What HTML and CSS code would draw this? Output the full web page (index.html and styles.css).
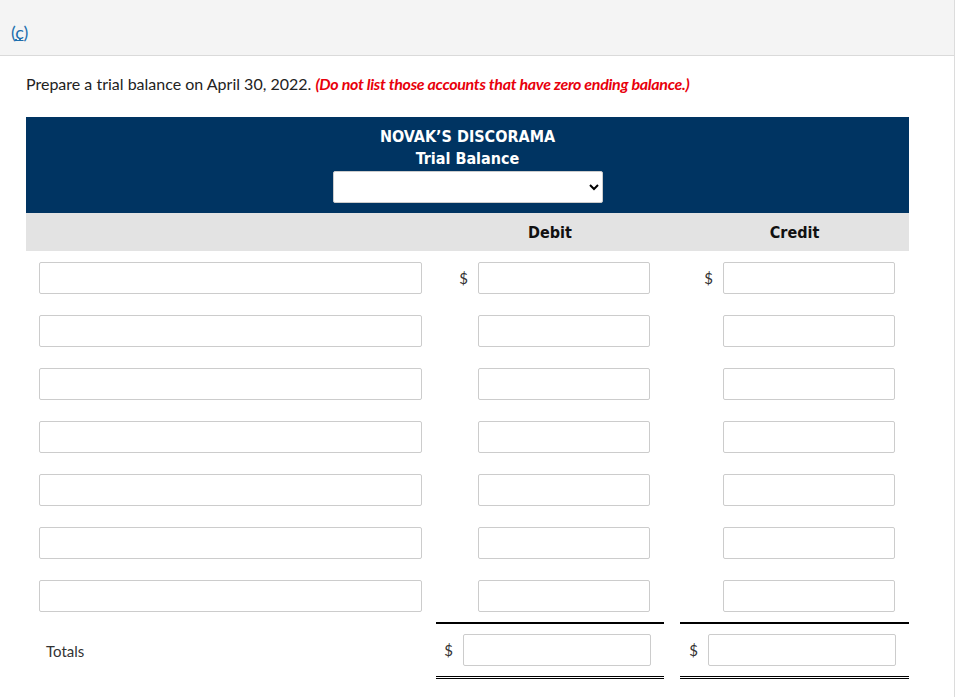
FILE: index.html
```html
<!DOCTYPE html>
<html lang="en">
<head>
    <meta charset="UTF-8">
    <title>Trial Balance</title>
    <link rel="stylesheet" href="styles.css">
</head>
<body>
    <div class="page">
        <div class="part-bar">
            <a href="#" class="part-link">(<u>c</u>)</a>
        </div>

        <div class="content">
            <p class="question">
                Prepare a trial balance on April 30, 2022.
                <em class="note">(Do not list those accounts that have zero ending balance.)</em>
            </p>

            <div class="tb">
                <div class="tb-head">
                    <div class="tb-title">NOVAK’S DISCORAMA</div>
                    <div class="tb-title">Trial Balance</div>
                    <select class="tb-date">
                        <option></option>
                    </select>
                </div>

                <div class="tb-row tb-cols">
                    <div></div>
                    <div class="col-label">Debit</div>
                    <div></div>
                    <div class="col-label">Credit</div>
                </div>

                <div class="tb-row">
                    <div class="acct"><input type="text"></div>
                    <div class="amt"><span class="cur">$</span><input type="text"></div>
                    <div></div>
                    <div class="amt"><span class="cur">$</span><input type="text"></div>
                </div>
                <div class="tb-row">
                    <div class="acct"><input type="text"></div>
                    <div class="amt"><input type="text"></div>
                    <div></div>
                    <div class="amt"><input type="text"></div>
                </div>
                <div class="tb-row">
                    <div class="acct"><input type="text"></div>
                    <div class="amt"><input type="text"></div>
                    <div></div>
                    <div class="amt"><input type="text"></div>
                </div>
                <div class="tb-row">
                    <div class="acct"><input type="text"></div>
                    <div class="amt"><input type="text"></div>
                    <div></div>
                    <div class="amt"><input type="text"></div>
                </div>
                <div class="tb-row">
                    <div class="acct"><input type="text"></div>
                    <div class="amt"><input type="text"></div>
                    <div></div>
                    <div class="amt"><input type="text"></div>
                </div>
                <div class="tb-row">
                    <div class="acct"><input type="text"></div>
                    <div class="amt"><input type="text"></div>
                    <div></div>
                    <div class="amt"><input type="text"></div>
                </div>
                <div class="tb-row">
                    <div class="acct"><input type="text"></div>
                    <div class="amt"><input type="text"></div>
                    <div></div>
                    <div class="amt"><input type="text"></div>
                </div>

                <div class="tb-row totals">
                    <div class="totals-label">Totals</div>
                    <div class="amt sum"><span class="cur">$</span><input type="text"></div>
                    <div></div>
                    <div class="amt sum"><span class="cur">$</span><input type="text"></div>
                </div>
            </div>
        </div>
    </div>
</body>
</html>
```

FILE: styles.css
```css
body {
    margin: 0;
    font-family: Lato, "Open Sans", Arial, sans-serif;
    color: #222;
    background-color: #fff;
}

.page {
    width: 954px;
    min-height: 697px;
    border-right: 1px solid #dcdcdc;
}

.part-bar {
    height: 56px;
    background-color: #f4f4f4;
    border-bottom: 1px solid #dadada;
    padding-left: 11px;
    box-sizing: border-box;
}

.part-link {
    display: inline-block;
    margin-top: 21px;
    font-size: 18px;
    color: #1c6fae;
    text-decoration: underline dotted;
}

.content {
    padding: 0 26px;
}

.question {
    margin: 18px 0 0;
    font-size: 16px;
    line-height: 20px;
}

.note {
    color: #e8000b;
    font-weight: bold;
    font-style: italic;
    letter-spacing: -0.3px;
}

.tb {
    width: 883px;
    margin-top: 23px;
}

.tb-head {
    background-color: #003462;
    color: #fff;
    text-align: center;
    padding: 9px 0 10px;
}

.tb-title {
    font-family: "DejaVu Sans Condensed", "DejaVu Sans", Verdana, sans-serif;
    font-weight: bold;
    font-size: 16px;
    line-height: 22px;
}

.tb-date {
    display: block;
    margin: 1px auto 0;
    width: 270px;
    height: 32px;
    border: 1px solid #ccc;
    border-radius: 2px;
    background-color: #fff;
    font-family: inherit;
}

.tb-row {
    display: grid;
    grid-template-columns: 410px 228px 16px 229px;
}

.tb-cols {
    background-color: #e3e3e3;
    height: 38px;
    align-items: center;
}

.col-label {
    text-align: center;
    font-family: "DejaVu Sans Condensed", "DejaVu Sans", Verdana, sans-serif;
    font-weight: bold;
    font-size: 16px;
    color: #111;
}

.tb-row input {
    height: 32px;
    box-sizing: border-box;
    border: 1px solid #ccc;
    border-radius: 2px;
    background-color: #fff;
}

.acct {
    padding: 11px 14px 10px 13px;
}

.acct input {
    width: 100%;
}

.amt {
    display: flex;
    justify-content: flex-end;
    align-items: center;
    gap: 10px;
    padding: 11px 14px 10px 0;
}

.amt input {
    width: 172px;
}

.cur {
    font-size: 15px;
    color: #333;
}

.totals .amt {
    border-top: 2px solid #000;
    border-bottom: 3px double #000;
    padding: 10px 13px 10px 0;
}

.totals .amt input {
    width: 188px;
}

.totals-label {
    padding-left: 20px;
    display: flex;
    align-items: center;
    font-size: 15px;
    color: #333;
}
```
